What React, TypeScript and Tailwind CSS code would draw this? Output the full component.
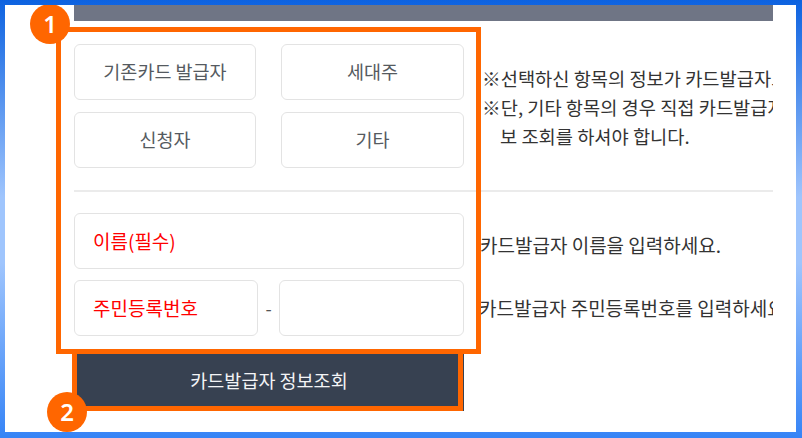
import React from "react";

const choices = ["기존카드 발급자", "세대주", "신청자", "기타"];

export default function App() {
  return (
    <div className="w-[802px] h-[438px] bg-[linear-gradient(to_bottom,#0d62e0,#9fc5fd_45%,#9fc5fd_60%,#3684f6)] pt-[5px] pl-[5px] pr-[6px] pb-[6px]">
      <div className="relative h-full bg-white overflow-hidden pl-[69px] font-['Noto_Sans_CJK_KR','Noto_Sans',sans-serif]">
        <div className="w-[699px] overflow-hidden">
          <div className="h-[16px] bg-[#6f7585]" />

          {/* section 1 */}
          <div className="mt-[23px] flex items-center">
            <div className="w-[390px] shrink-0 grid grid-cols-[182px_183px] gap-x-[25px] gap-y-[12px]">
              {choices.map((c) => (
                <div
                  key={c}
                  className="h-[56px] flex items-center justify-center rounded-[6px] border border-[#e3e3e3] bg-white text-[18.5px] text-[#555a60]"
                >
                  {c}
                </div>
              ))}
            </div>
            <div className="ml-[18px] flex-1 min-w-0 overflow-hidden whitespace-nowrap text-[18.7px] leading-[29px] text-[#333]">
              <div>※선택하신 항목의 정보가 카드발급자로 조회됩니다.</div>
              <div>※단, 기타 항목의 경우 직접 카드발급자 정</div>
              <div className="pl-[18px]">보 조회를 하셔야 합니다.</div>
            </div>
          </div>

          <div className="mt-[22px] h-[2px] bg-[#ebebeb]" />

          {/* section 2 */}
          <div className="mt-[21px] flex items-center">
            <div className="w-[390px] shrink-0 h-[56px] rounded-[6px] border border-[#e3e3e3] flex items-center pl-[18px] text-[19px] text-[#ff0000]">
              이름(필수)
            </div>
            <div className="ml-[16px] mt-[8px] flex-1 min-w-0 overflow-hidden whitespace-nowrap text-[19px] text-[#333]">
              카드발급자 이름을 입력하세요.
            </div>
          </div>
          <div className="mt-[11px] flex items-center">
            <div className="w-[390px] shrink-0 flex items-center">
              <div className="w-[184px] h-[56px] rounded-[6px] border border-[#e3e3e3] flex items-center pl-[18px] text-[19px] text-[#ff0000]">
                주민등록번호
              </div>
              <div className="w-[21px] text-center text-[18px] text-[#555]">-</div>
              <div className="w-[185px] h-[56px] rounded-[6px] border border-[#e3e3e3]" />
            </div>
            <div className="ml-[15px] flex-1 min-w-0 overflow-hidden whitespace-nowrap text-[19px] text-[#333]">
              카드발급자 주민등록번호를 입력하세요.
            </div>
          </div>

          <div className="mt-[14px] w-[390px] h-[61px] bg-[#374151] flex items-center justify-center text-[18.5px] text-[#f3f4f6]">
            카드발급자 정보조회
          </div>
        </div>

        {/* annotations */}
        <div className="absolute left-[51px] top-[22px] w-[425px] h-[327px] border-[5px] border-[#ff6600]" />
        <div className="absolute left-[67px] top-[344px] w-[391px] h-[62px] border-[5px] border-[#ff6600]" />
        <div className="absolute left-[25px] top-[-1px] w-[40px] h-[40px] rounded-full bg-[#ff6600] flex items-center justify-center text-white text-[24px] font-semibold font-['Noto_Sans',sans-serif]">
          1
        </div>
        <div className="absolute left-[42px] top-[387px] w-[40px] h-[40px] rounded-full bg-[#ff6600] flex items-center justify-center text-white text-[24px] font-semibold font-['Noto_Sans',sans-serif]">
          2
        </div>
      </div>
    </div>
  );
}
